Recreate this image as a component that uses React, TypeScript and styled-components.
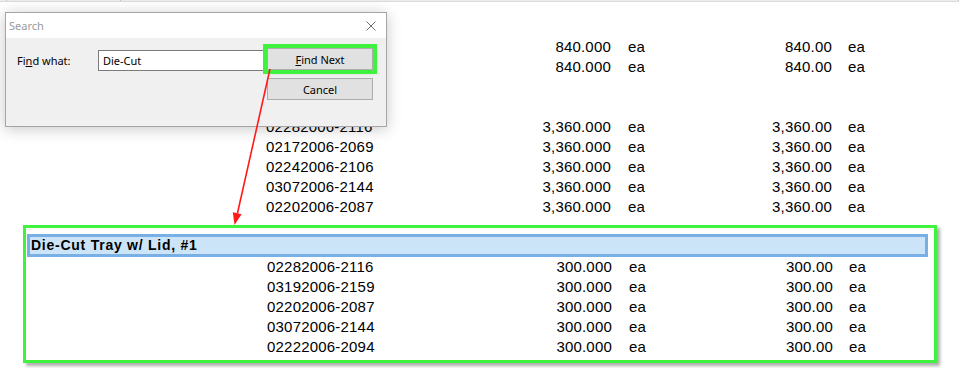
import styled, { createGlobalStyle } from 'styled-components';

type Line = {
  lot: string;
  qty: string;
  amount: string;
};

type RowProps = {
  $inset: number;
};

type StripProps = {
  $width?: number;
};

type ButtonProps = {
  $highlight?: boolean;
};

const TOP_LINES: Line[] = [
  { lot: '', qty: '840.000', amount: '840.00' },
  { lot: '', qty: '840.000', amount: '840.00' },
];

const TRAY_LINES: Line[] = [
  { lot: '02282006-2116', qty: '3,360.000', amount: '3,360.00' },
  { lot: '02172006-2069', qty: '3,360.000', amount: '3,360.00' },
  { lot: '02242006-2106', qty: '3,360.000', amount: '3,360.00' },
  { lot: '03072006-2144', qty: '3,360.000', amount: '3,360.00' },
  { lot: '02202006-2087', qty: '3,360.000', amount: '3,360.00' },
];

const LID_LINES: Line[] = [
  { lot: '02282006-2116', qty: '300.000', amount: '300.00' },
  { lot: '03192006-2159', qty: '300.000', amount: '300.00' },
  { lot: '02202006-2087', qty: '300.000', amount: '300.00' },
  { lot: '03072006-2144', qty: '300.000', amount: '300.00' },
  { lot: '02222006-2094', qty: '300.000', amount: '300.00' },
];

const ReportLines = ({ lines, inset }: { lines: Line[]; inset: number }) => (
  <>
    {lines.map((line, i) => (
      <Row key={`${line.lot}-${i}`} $inset={inset}>
        <Lot>{line.lot}</Lot>
        <Qty>{line.qty}</Qty>
        <Unit>ea</Unit>
        <Amount>{line.amount}</Amount>
        <AmountUnit>ea</AmountUnit>
      </Row>
    ))}
  </>
);

const App = () => (
  <Page>
    <GlobalStyle />
    <HeaderStrip>
      <StripCell $width={7} />
      <StripCell $width={114} />
      <StripCell />
    </HeaderStrip>

    <Report>
      <ReportLines lines={TOP_LINES} inset={266} />
      <BlankRows />
      <ReportLines lines={TRAY_LINES} inset={266} />

      <MatchBox>
        <GroupHeader>Die-Cut Tray w/ Lid, #1</GroupHeader>
        <ReportLines lines={LID_LINES} inset={240} />
      </MatchBox>
    </Report>

    <Dialog>
      <TitleBar>
        <Title>Search</Title>
        <svg width="10" height="10" viewBox="0 0 10 10">
          <path d="M0.5 0.5 L9.5 9.5 M9.5 0.5 L0.5 9.5" stroke="#6f6f6f" strokeWidth="1" fill="none" />
        </svg>
      </TitleBar>
      <DialogBody>
        <FieldRow>
          <Label>
            Fi<u>n</u>d what:
          </Label>
          <Input value="Die-Cut" readOnly />
        </FieldRow>
        <ButtonColumn>
          <DialogButton $highlight>
            <u>F</u>ind Next
          </DialogButton>
          <DialogButton>Cancel</DialogButton>
        </ButtonColumn>
      </DialogBody>
    </Dialog>

    <Annotation width="959" height="368" viewBox="0 0 959 368">
      <line x1="270" y1="69" x2="237.4" y2="213.5" stroke="#ff1a1a" strokeWidth="1.6" />
      <polygon points="234.5,225 241.6,214.3 232.8,212.3" fill="#ff1a1a" />
    </Annotation>
  </Page>
);
export default App;

const GlobalStyle = createGlobalStyle`
  html, body {
    margin: 0;
    padding: 0;
    background: #ffffff;
  }

  body {
    font-family: 'Liberation Sans', Arial, sans-serif;
  }
`;

const Page = styled.div`
  position: relative;
  width: 959px;
  height: 368px;
  overflow: hidden;
  background: #ffffff;
`;

const HeaderStrip = styled.div`
  display: flex;
  height: 1px;
  border-bottom: 1px solid #dcdcdc;
  background: #ececec;
`;

const StripCell = styled.div<StripProps>`
  ${({ $width }) => ($width ? `width: ${$width}px;` : 'flex: 1;')}
  box-sizing: border-box;
  border-right: 1px solid #c4c4c4;
`;

const Report = styled.div`
  padding-top: 35px;
`;

const Row = styled.div<RowProps>`
  display: grid;
  grid-template-columns: 130px 215px 89px 132px 1fr;
  height: 20px;
  padding-left: ${({ $inset }) => $inset}px;

  font-size: 15px;
  letter-spacing: 0.2px;
  line-height: 20px;
  color: #000000;
  white-space: nowrap;
`;

const Lot = styled.span``;

const Qty = styled.span`
  text-align: right;
`;

const Unit = styled.span`
  padding-left: 17px;
`;

const Amount = styled.span`
  text-align: right;
`;

const AmountUnit = styled.span`
  padding-left: 16px;
`;

const BlankRows = styled.div`
  height: 40px;
`;

const MatchBox = styled.div`
  box-sizing: border-box;
  width: 914px;
  margin: 8px 0 0 23px;
  padding: 6px 6px 3px 1px;

  border: 3px solid #3ef23e;
  box-shadow: 3px 3px 3px rgba(0, 0, 0, 0.32);
`;

const GroupHeader = styled.div`
  box-sizing: border-box;
  height: 23px;
  padding-left: 1px;

  border: 3px solid #78b0e6;
  background: #cce4f7;

  font-size: 14px;
  font-weight: 700;
  letter-spacing: 0.75px;
  line-height: 17px;
  color: #000000;
`;

const Dialog = styled.div`
  position: absolute;
  top: 12px;
  left: 5px;
  z-index: 2;

  box-sizing: border-box;
  width: 382px;
  height: 115px;

  border: 1px solid #a5a5a5;
  background: #f0f0f0;
  box-shadow: 0 2px 14px rgba(0, 0, 0, 0.22);

  font-family: 'Noto Sans', 'Open Sans', sans-serif;
  font-size: 11px;
  color: #000000;
`;

const TitleBar = styled.div`
  display: flex;
  align-items: center;
  justify-content: space-between;
  height: 25px;
  padding: 0 10px 0 3px;

  background: #ffffff;
`;

const Title = styled.span`
  font-size: 11px;
  color: #9a9a9a;
`;

const DialogBody = styled.div`
  display: flex;
  align-items: flex-start;
  padding: 10px 12px 0 11px;
`;

const FieldRow = styled.div`
  display: flex;
  align-items: center;
  margin-top: 2px;
`;

const Label = styled.span`
  width: 81px;
`;

const Input = styled.input`
  box-sizing: border-box;
  width: 166px;
  height: 21px;
  margin: 0;
  padding: 0 4px;

  border: 1px solid #7a7a7a;
  border-radius: 0;
  background: #ffffff;
  outline: none;

  font-family: inherit;
  font-size: 11px;
  color: #000000;
`;

const ButtonColumn = styled.div`
  display: flex;
  flex-direction: column;
  gap: 8px;
  margin-left: 3px;
`;

const DialogButton = styled.button<ButtonProps>`
  box-sizing: border-box;
  width: 106px;
  height: 22px;
  margin: 0;
  padding: 0;

  border: 1px solid #adadad;
  border-radius: 0;
  background: #e1e1e1;

  font-family: inherit;
  font-size: 11px;
  color: #000000;

  ${({ $highlight }) => $highlight && `
    outline: 4px solid #3ef23e;
    outline-offset: 0;
    box-shadow: 2px 2px 4px rgba(0, 0, 0, 0.3);
  `}
`;

const Annotation = styled.svg`
  position: absolute;
  top: 0;
  left: 0;
  z-index: 3;
  pointer-events: none;
`;
